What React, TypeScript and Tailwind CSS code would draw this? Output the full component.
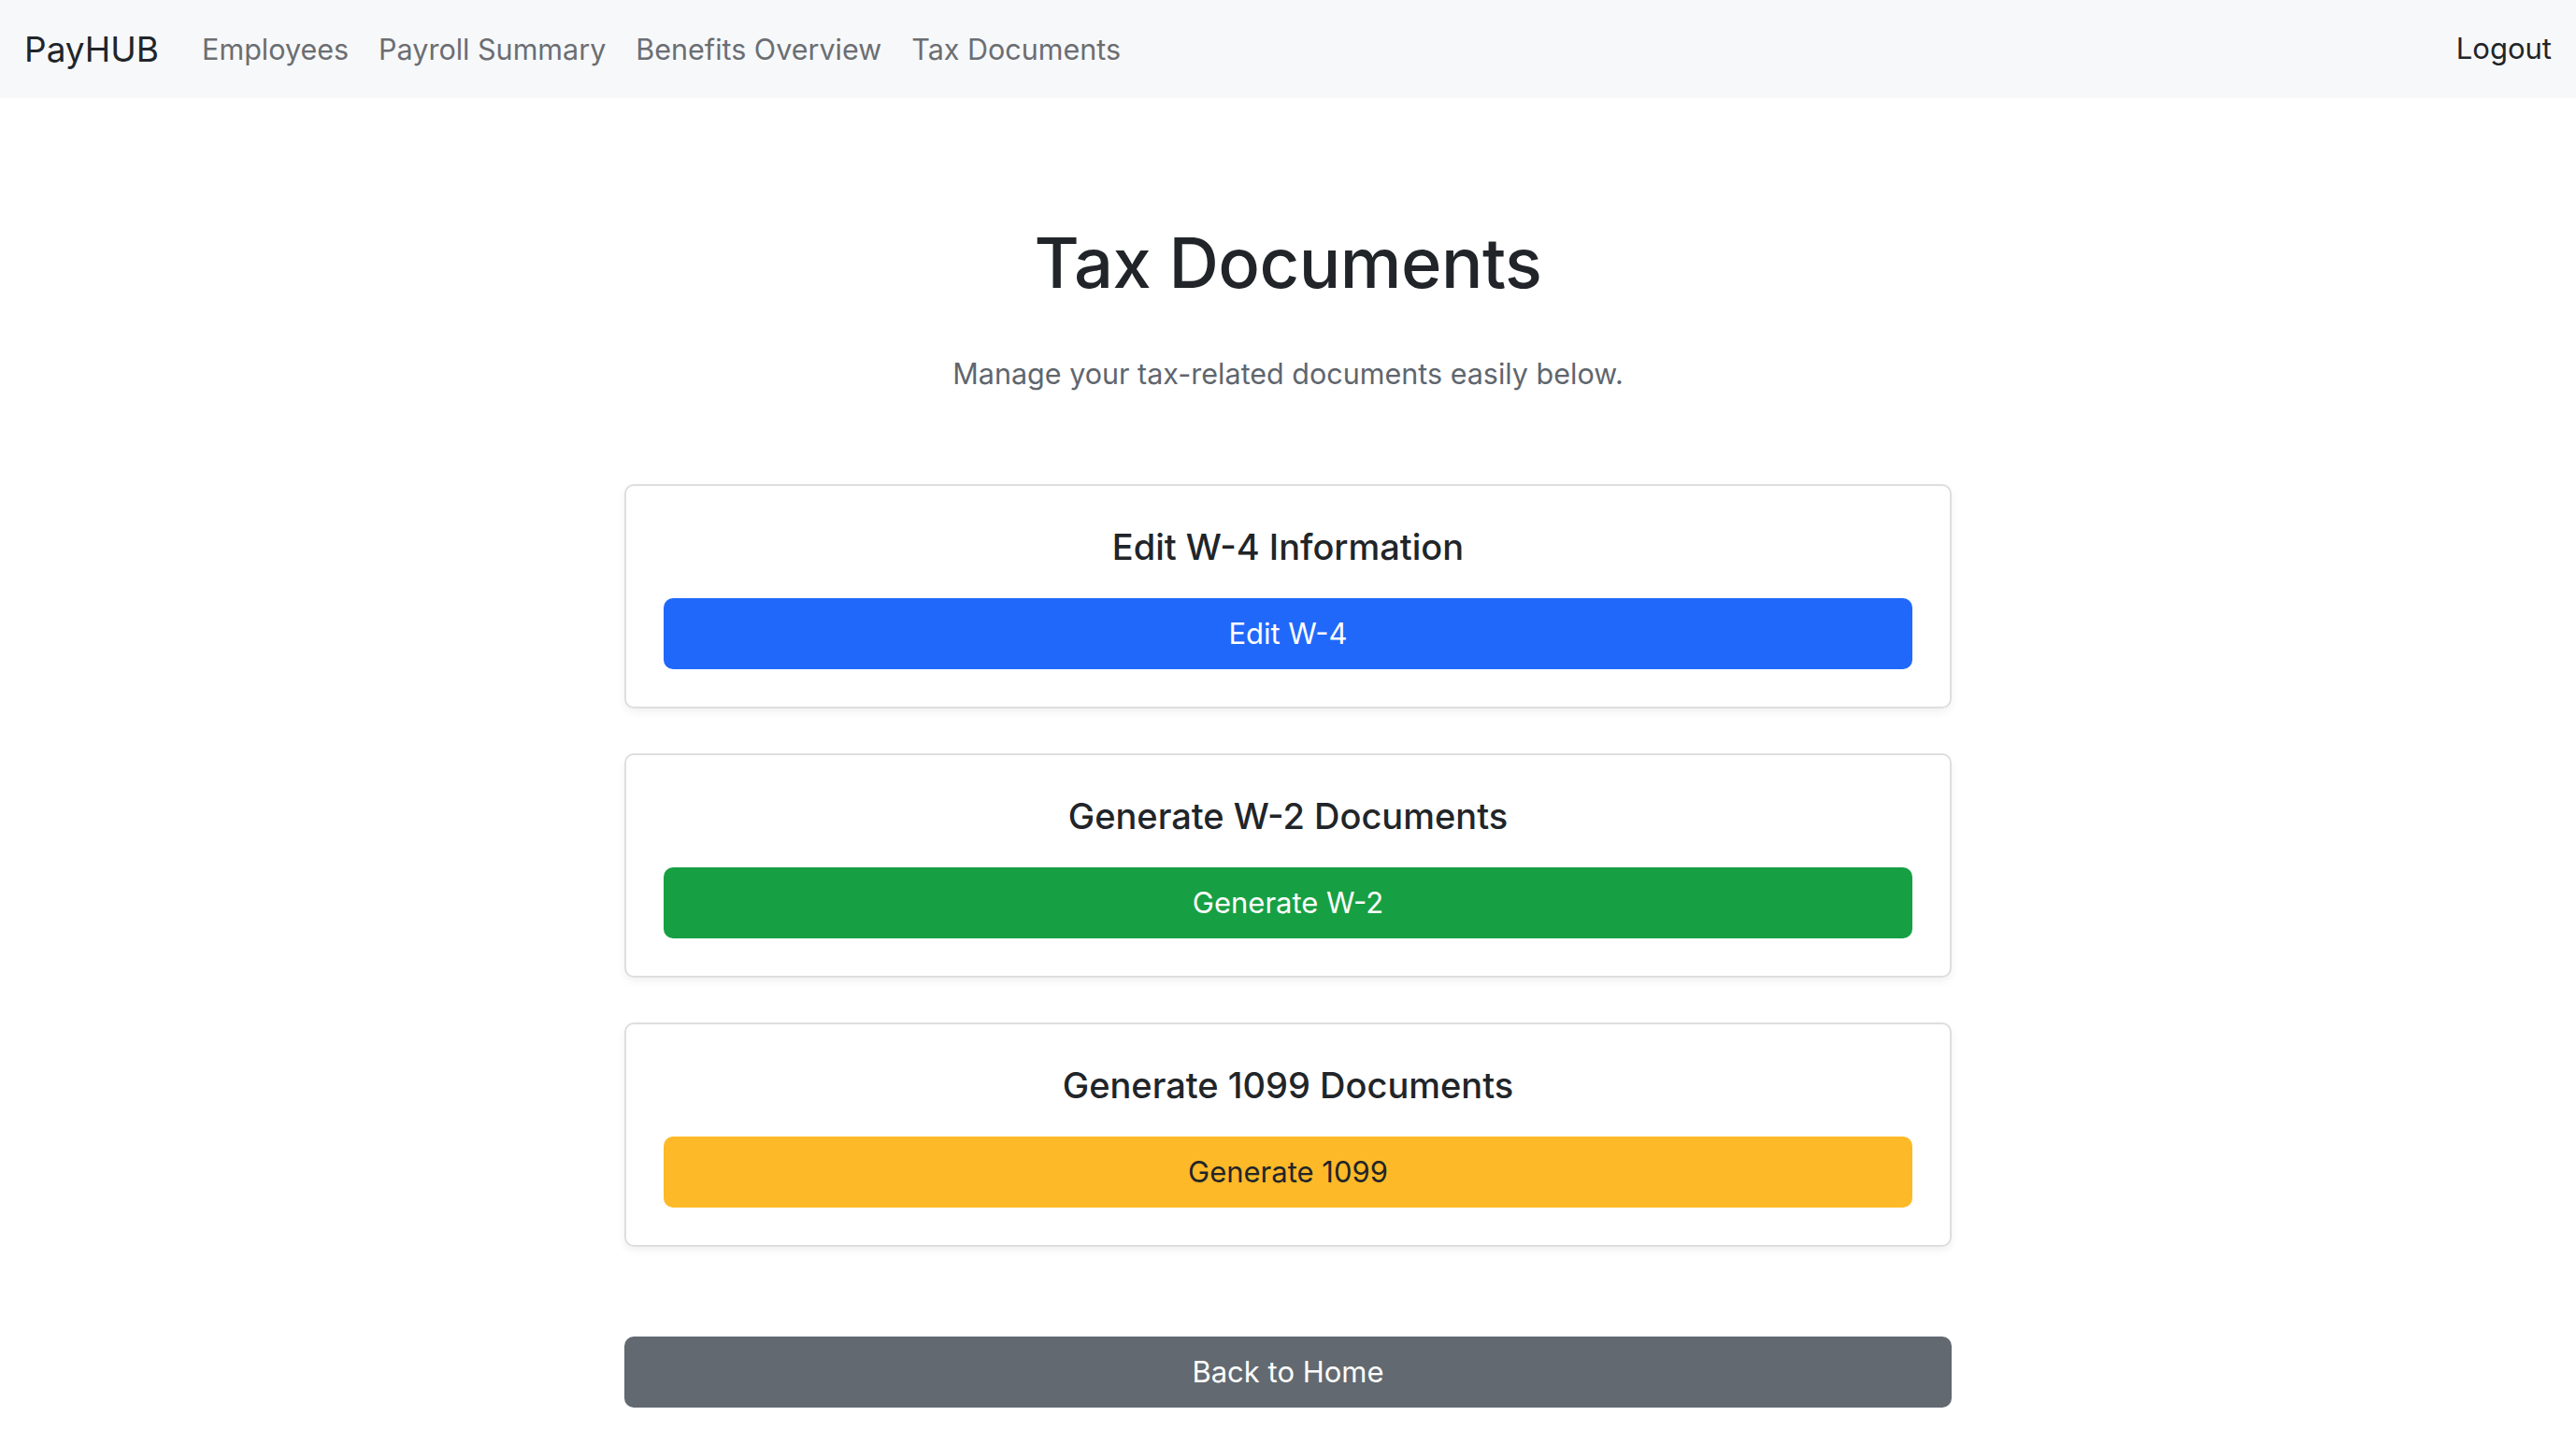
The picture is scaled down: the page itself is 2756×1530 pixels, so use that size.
import React from "react";

const navLinks = ["Employees", "Payroll Summary", "Benefits Overview", "Tax Documents"];

const cards = [
  { title: "Edit W-4 Information", label: "Edit W-4", btn: "bg-[#2068fa] text-white" },
  { title: "Generate W-2 Documents", label: "Generate W-2", btn: "bg-[#17a043] text-white" },
  { title: "Generate 1099 Documents", label: "Generate 1099", btn: "bg-[#fdb928] text-[#212529]" },
];

export default function App() {
  return (
    <div className="min-h-screen bg-white text-[#212529] font-['Inter','Noto_Sans',sans-serif]">
      {/* Navbar */}
      <nav className="h-[105px] bg-[#f7f8fa] px-[26px] flex items-center justify-between">
        <div className="flex items-center">
          <span className="text-[37px] mr-[46px]">PayHUB</span>
          <div className="flex items-center gap-[32px]">
            {navLinks.map((l) => (
              <a key={l} className="text-[30.5px] text-[#6b6e72]">{l}</a>
            ))}
          </div>
        </div>
        <a className="text-[31px] text-[#212529]">Logout</a>
      </nav>

      {/* Main */}
      <main className="w-[1420px] mx-auto pt-[134px] flex flex-col items-center">
        <h1 className="text-[74px] leading-[84px] font-medium tracking-[-0.5px]">Tax Documents</h1>
        <p className="mt-[53px] text-[30.5px] leading-[47px] text-[#5f666e]">
          Manage your tax-related documents easily below.
        </p>

        <div className="mt-[95px] w-full flex flex-col gap-[48px]">
          {cards.map((c) => (
            <div
              key={c.title}
              className="border-2 border-[#dedede] rounded-[10px] shadow-[0_4px_10px_rgba(0,0,0,0.06)] pt-[44px] pb-[40px] px-[40px] flex flex-col items-center"
            >
              <h5 className="text-[38px] leading-[42px] font-medium">{c.title}</h5>
              <button className={`mt-[34px] w-full h-[76px] rounded-[10px] text-[31px] ${c.btn}`}>
                {c.label}
              </button>
            </div>
          ))}
        </div>

        <button className="mt-[96px] w-full h-[76px] rounded-[10px] bg-[#626970] text-white text-[31px]">
          Back to Home
        </button>
      </main>
    </div>
  );
}
